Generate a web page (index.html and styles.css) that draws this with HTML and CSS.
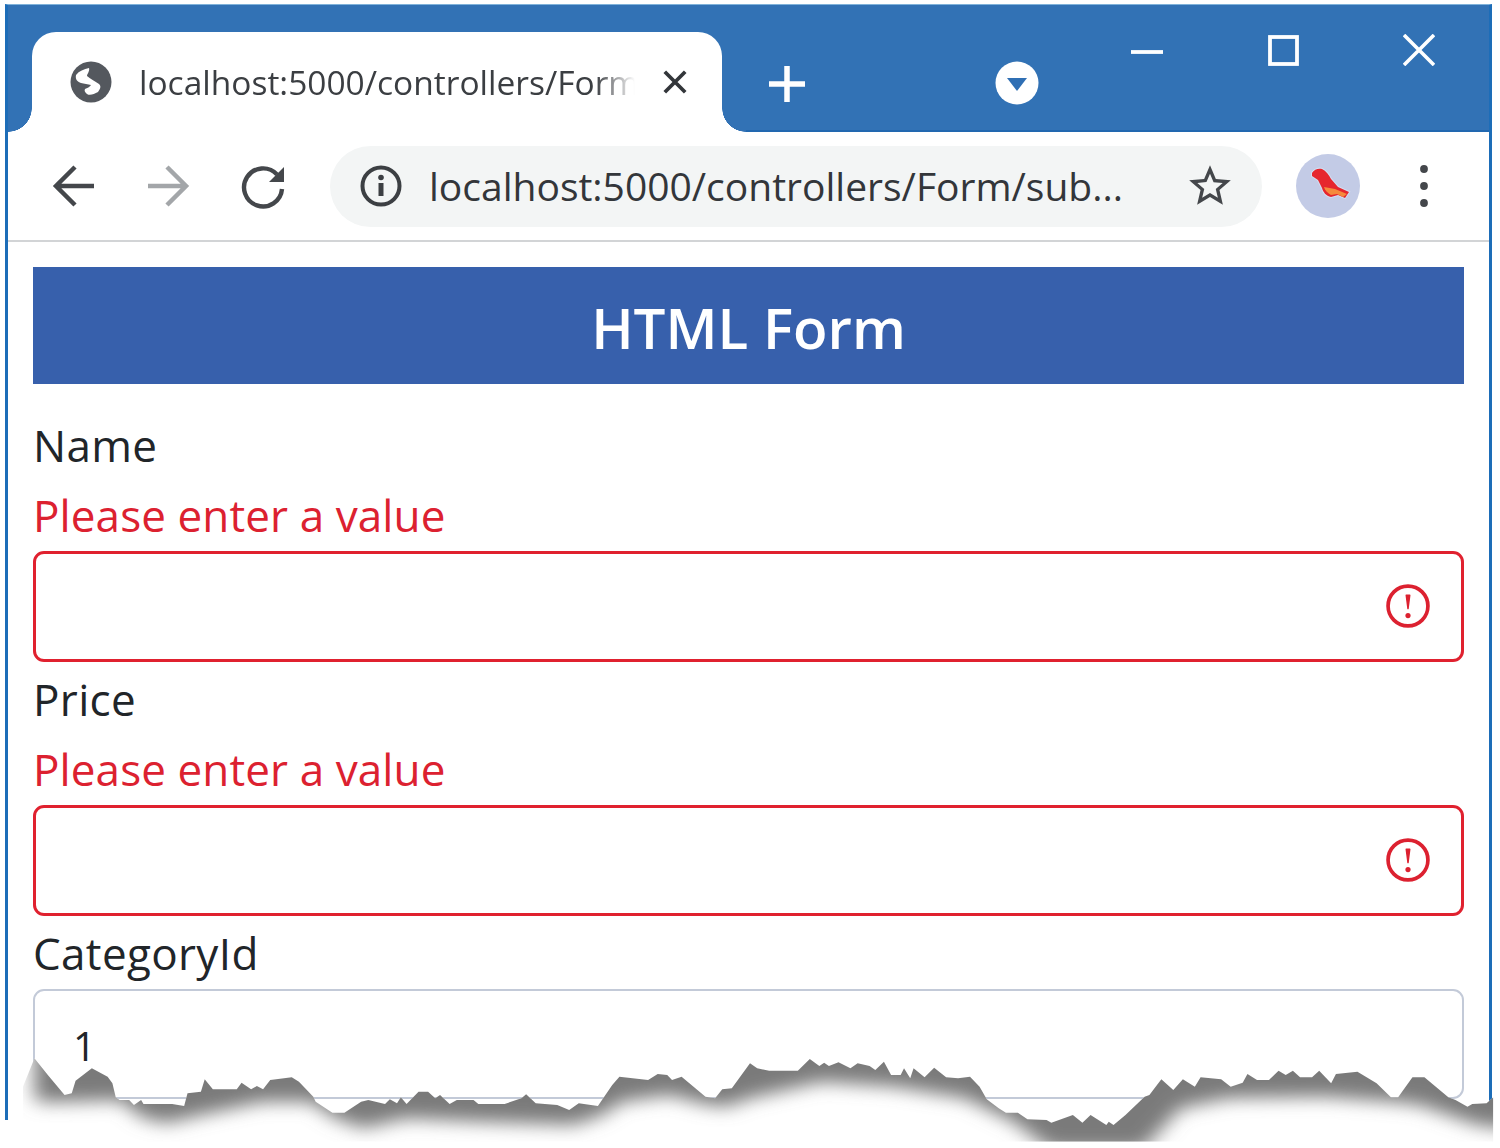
FILE: index.html
```html
<!DOCTYPE html>
<html lang="en">
<head>
<meta charset="utf-8">
<title>HTML Form</title>
<link rel="stylesheet" href="styles.css">
</head>
<body>
<div class="window">
  <div class="titlebar">
    <div class="tab">
      <svg class="globe" viewBox="0 0 42 42"><circle cx="21" cy="21" r="20.5" fill="#54585e"/><path d="M6 14C9 10 14 8 19 7C20 10 17 13 17 15C20 18 25 20 29 23C31 25 31 27 28 31C24 33 20 35 17 33C15 31 14 30 15 28C17 27 20 26 21 24C18 23 14 23 11 22C8 21 5 19 6 14Z" fill="#fff"/></svg>
      <span class="tab-title">localhost:5000/controllers/Form</span>
      <svg class="tab-close" viewBox="0 0 28 28"><path d="M3 3L25 25M25 3L3 25" stroke="#33363a" stroke-width="4"/></svg>
    </div>
    <svg class="new-tab" viewBox="0 0 38 38"><path d="M19 1V37M1 19H37" stroke="#fff" stroke-width="5.5"/></svg>
    <svg class="tab-menu" viewBox="0 0 44 44"><circle cx="22" cy="22" r="21.5" fill="#fff"/><path d="M12 17H32L22 30Z" fill="#2f6fb4"/></svg>
    <div class="controls">
      <svg class="ctl-min" viewBox="0 0 32 32"><path d="M0 16H32" stroke="#fff" stroke-width="3.8"/></svg>
      <svg class="ctl-max" viewBox="0 0 32 32"><rect x="3" y="3" width="27" height="27" fill="none" stroke="#fff" stroke-width="3.8"/></svg>
      <svg class="ctl-close" viewBox="0 0 32 32"><path d="M1 1L31 31M31 1L1 31" stroke="#fff" stroke-width="3.6"/></svg>
    </div>
  </div>

  <div class="toolbar">
    <svg class="nav" viewBox="0 0 48 48"><path d="M44 24H6M25 5L6 24L25 43" fill="none" stroke="#44474b" stroke-width="4.5"/></svg>
    <svg class="nav" viewBox="0 0 48 48"><path d="M4 24H42M23 5L42 24L23 43" fill="none" stroke="#a3a6a9" stroke-width="4.5"/></svg>
    <svg class="nav nav-reload" viewBox="0 0 48 48"><path d="M37 12.5A19 19 0 1 0 42 27" fill="none" stroke="#44474b" stroke-width="4.4"/><path d="M44 5V20H29Z" fill="#44474b"/></svg>
    <div class="omnibox">
      <svg class="info" viewBox="0 0 42 42"><circle cx="21" cy="21" r="18.5" fill="none" stroke="#3c3f43" stroke-width="4"/><circle cx="21" cy="12.5" r="2.8" fill="#3c3f43"/><path d="M21 18V31" stroke="#3c3f43" stroke-width="5"/></svg>
      <span class="address">localhost:5000/controllers/Form/sub...</span>
      <svg class="star" viewBox="0 0 24 24"><path fill="#44474b" d="M22 9.24l-7.19-.62L12 2 9.19 8.63 2 9.24l5.46 4.73L5.82 21 12 17.27 18.18 21l-1.63-7.03L22 9.24zM12 15.4l-3.76 2.27 1-4.28-3.32-2.88 4.38-.38L12 6.1l1.71 4.04 4.38.38-3.32 2.88 1 4.28L12 15.4z"/></svg>
    </div>
    <svg class="avatar" viewBox="0 0 64 64"><circle cx="32" cy="32" r="32" fill="#c3cbe6"/><path d="M16 19C18 15 23 14 26 15C30 17 33 21 35 25L42 33L53 38L49 44L42 41L35 43C30 42 27 38 26 34L22 26L16 22Z" fill="#e6262e" stroke="#d3def2" stroke-width="2" paint-order="stroke"/><path d="M28 33L39 35L51 40L47 43L41 40L35 41C32 39 29 37 28 33Z" fill="#f58a3c"/></svg>
    <svg class="dots" viewBox="0 0 48 48"><circle cx="24" cy="7" r="3.9" fill="#44474b"/><circle cx="24" cy="24" r="3.9" fill="#44474b"/><circle cx="24" cy="41" r="3.9" fill="#44474b"/></svg>
  </div>

  <main class="page">
    <h1 class="page-title">HTML Form</h1>
    <form class="form">
      <div class="group">
        <label class="label">Name</label>
        <div class="error">Please enter a value</div>
        <div class="field">
          <input class="control invalid" type="text">
          <svg class="alert" viewBox="0 0 12 12"><circle cx="6" cy="6" r="4.6" fill="none" stroke="#dc2130" stroke-width=".85"/><path d="M5.6 3.5h.8L6 6.6z" fill="#dc2130" stroke="#dc2130" stroke-width=".35" stroke-linejoin="round"/><circle cx="6" cy="8.2" r=".6" fill="#dc2130"/></svg>
        </div>
      </div>
      <div class="group">
        <label class="label">Price</label>
        <div class="error">Please enter a value</div>
        <div class="field">
          <input class="control invalid" type="text">
          <svg class="alert" viewBox="0 0 12 12"><circle cx="6" cy="6" r="4.6" fill="none" stroke="#dc2130" stroke-width=".85"/><path d="M5.6 3.5h.8L6 6.6z" fill="#dc2130" stroke="#dc2130" stroke-width=".35" stroke-linejoin="round"/><circle cx="6" cy="8.2" r=".6" fill="#dc2130"/></svg>
        </div>
      </div>
      <div class="group">
        <label class="label">CategoryId</label>
        <div class="field">
          <input class="control" type="text" value="1">
        </div>
      </div>
    </form>
  </main>
</div>

<svg class="tear" viewBox="0 0 3136 564" preserveAspectRatio="none">
  <defs>
    <clipPath id="tear-clip"><path d="M48 545V380L72 295L100 345L135 405L150 400L158 362L192 325L225 350L235 370L242 412L250 420L270 420L280 435L295 420L300 432L360 432L385 438L392 400L420 395L428 358L445 388L495 388L505 368L525 388L537 378L550 388L565 360L610 352L625 365L655 410L660 425L695 458L720 458L755 425L770 420L805 432L815 418L830 430L838 412L850 432L875 395L895 395L910 415L920 405L940 432L955 420L990 420L1000 432L1055 432L1090 415L1100 403L1120 430L1165 435L1190 450L1210 430L1250 438L1280 375L1295 350L1355 360L1375 342L1395 345L1405 360L1425 350L1475 410L1495 415L1510 388L1530 385L1568 310L1583 325L1608 332L1668 332L1693 297L1713 318L1723 308L1733 318L1753 307L1778 325L1793 310L1818 318L1830 330L1848 305L1863 345L1883 345L1890 325L1903 355L1910 325L1933 352L1953 323L1978 352L2003 355L2028 350L2048 380L2063 418L2088 445L2103 458L2128 458L2148 478L2188 480L2198 488L2243 465L2263 488L2280 465L2313 495L2318 485L2328 495L2353 465L2393 410L2403 405L2428 358L2453 390L2473 358L2498 380L2510 352L2553 358L2573 380L2598 368L2608 342L2628 360L2653 360L2673 332L2688 345L2703 332L2718 352L2743 352L2758 332L2783 370L2793 342L2838 335L2878 370L2908 412L2923 412L2953 352L2978 352L3028 412L3043 420L3068 440L3078 432L3108 430L3122 412V545Z"/></clipPath>
    <filter id="tear-blur" x="-5%" y="-20%" width="110%" height="140%"><feGaussianBlur stdDeviation="20 27"/></filter>
  </defs>
  <path class="tear-paper" d="M48 545V380L72 295L100 345L135 405L150 400L158 362L192 325L225 350L235 370L242 412L250 420L270 420L280 435L295 420L300 432L360 432L385 438L392 400L420 395L428 358L445 388L495 388L505 368L525 388L537 378L550 388L565 360L610 352L625 365L655 410L660 425L695 458L720 458L755 425L770 420L805 432L815 418L830 430L838 412L850 432L875 395L895 395L910 415L920 405L940 432L955 420L990 420L1000 432L1055 432L1090 415L1100 403L1120 430L1165 435L1190 450L1210 430L1250 438L1280 375L1295 350L1355 360L1375 342L1395 345L1405 360L1425 350L1475 410L1495 415L1510 388L1530 385L1568 310L1583 325L1608 332L1668 332L1693 297L1713 318L1723 308L1733 318L1753 307L1778 325L1793 310L1818 318L1830 330L1848 305L1863 345L1883 345L1890 325L1903 355L1910 325L1933 352L1953 323L1978 352L2003 355L2028 350L2048 380L2063 418L2088 445L2103 458L2128 458L2148 478L2188 480L2198 488L2243 465L2263 488L2280 465L2313 495L2318 485L2328 495L2353 465L2393 410L2403 405L2428 358L2453 390L2473 358L2498 380L2510 352L2553 358L2573 380L2598 368L2608 342L2628 360L2653 360L2673 332L2688 345L2703 332L2718 352L2743 352L2758 332L2783 370L2793 342L2838 335L2878 370L2908 412L2923 412L2953 352L2978 352L3028 412L3043 420L3068 440L3078 432L3108 430L3122 412V545Z"/>
  <g clip-path="url(#tear-clip)">
    <path class="tear-shadow" filter="url(#tear-blur)" d="M72 150V420L100 427L200 423L250 420L300 475L350 490L420 465L550 425L650 425L700 475L760 505L850 475L1000 485L1200 495L1260 465L1300 425L1400 405L1480 435L1520 440L1568 415L1718 365L1868 380L2018 415L2118 485L2198 570L2388 570L2468 445L2568 415L2768 410L2908 425L2968 435L3088 495L3200 515V150Z"/>
  </g>
</svg>
</body>
</html>
```

FILE: styles.css
```css
* { box-sizing: border-box; }

html, body { margin: 0; padding: 0; background: #fff; }

body {
  position: relative;
  width: 1500px;
  height: 1148px;
  overflow: hidden;
  font-family: "Open Sans", "Noto Sans", sans-serif;
  color: #212529;
}

svg { display: block; flex: none; }

.window {
  margin: 4px 0 0 5px;
  width: 1487px;
  height: 1116px;
  border-top: 1px solid #7fb2da;
  border-left: 3px solid #1d6db8;
  border-right: 3px solid #1d6db8;
  overflow: hidden;
  background: #fff;
}

/* Title bar */
.titlebar {
  display: flex;
  height: 127px;
  background: #3272b5;
  border-bottom: 2px solid #2268b0;
}

.tab {
  position: relative;
  display: flex;
  align-items: center;
  width: 690px;
  height: 100px;
  margin: 27px 0 -2px 24px;
  padding: 0 0 0 38px;
  background: #fff;
  border-radius: 24px 24px 0 0;
}

.tab::before,
.tab::after {
  content: "";
  position: absolute;
  bottom: 0;
  width: 24px;
  height: 24px;
}

.tab::before {
  left: -24px;
  background: radial-gradient(circle at 0 0, #3272b5 23.5px, #fff 24px);
}

.tab::after {
  right: -24px;
  background: radial-gradient(circle at 100% 0, #3272b5 23.5px, #fff 24px);
}

.globe { width: 42px; height: 42px; margin-bottom: 1px; }

.tab-title {
  width: 496px;
  margin-left: 27px;
  padding-bottom: 1px;
  font-size: 33.5px;
  color: #3b3e42;
  white-space: nowrap;
  overflow: hidden;
  -webkit-mask-image: linear-gradient(to right, #000 92%, transparent);
  mask-image: linear-gradient(to right, #000 92%, transparent);
}

.tab-close { width: 26px; height: 26px; margin-left: 27px; }

.new-tab { width: 38px; height: 38px; margin: 60px 0 0 46px; }

.tab-menu { width: 44px; height: 44px; margin: 56px 0 0 189px; }

.controls {
  display: flex;
  align-items: flex-start;
  margin-left: 92px;
  padding-top: 29px;
}

.ctl-min { width: 32px; height: 32px; margin-top: 2px; }
.ctl-max { width: 32px; height: 32px; margin-left: 104px; }
.ctl-close { width: 32px; height: 32px; margin-left: 104px; }

/* Toolbar */
.toolbar {
  display: flex;
  align-items: center;
  height: 110px;
  padding: 0 0 0 42px;
  border-bottom: 2px solid #d2d4d6;
}

.nav { width: 48px; height: 48px; margin-right: 46px; }
.nav-reload { margin-left: 2px; }

.omnibox {
  display: flex;
  align-items: center;
  justify-content: space-between;
  width: 932px;
  height: 81px;
  margin-left: -4px;
  padding: 0 27px 0 30px;
  background: #f3f5f5;
  border-radius: 41px;
}

.info { width: 42px; height: 42px; }

.address {
  flex: 1;
  margin-left: 27px;
  padding-bottom: 2px;
  font-size: 39px;
  color: #33363a;
  white-space: nowrap;
}

.star { width: 50px; height: 50px; }

.avatar { width: 64px; height: 64px; margin-left: 34px; }

.dots { width: 48px; height: 48px; margin-left: 40px; }

/* Page */
.page { padding: 25px 25px 0; }

.page-title {
  display: flex;
  align-items: center;
  justify-content: center;
  height: 117px;
  margin: 0;
  padding-top: 4px;
  background: #3760ac;
  color: #fff;
  font-size: 56.5px;
  font-weight: 600;
}

.form {
  display: flex;
  flex-direction: column;
  gap: 3px;
  margin-top: 27px;
}

.group { display: flex; flex-direction: column; }

.label,
.error {
  display: block;
  height: 70px;
  font-size: 44px;
}

.label { line-height: 68px; letter-spacing: .35px; }

.error { line-height: 69px; letter-spacing: .1px; color: #dc2130; }

.field { position: relative; }

.control {
  display: block;
  width: 100%;
  height: 110px;
  padding: 2px 38px 0;
  border: 2px solid #c3cad8;
  border-radius: 11px;
  background: #fff;
  font: 40px "Open Sans", "Noto Sans", sans-serif;
  color: #212529;
  outline: none;
}

.control.invalid {
  height: 111px;
  border: 3px solid #e0212f;
}

.alert {
  position: absolute;
  top: 29px;
  right: 30px;
  width: 52px;
  height: 52px;
}

/* Torn paper edge over the bottom of the page */
.tear {
  position: absolute;
  left: 0;
  top: 960px;
  width: 1500px;
  height: 188px;
}

.tear-paper { fill: #fff; }
.tear-shadow { fill: #7a7a7a; }
```
